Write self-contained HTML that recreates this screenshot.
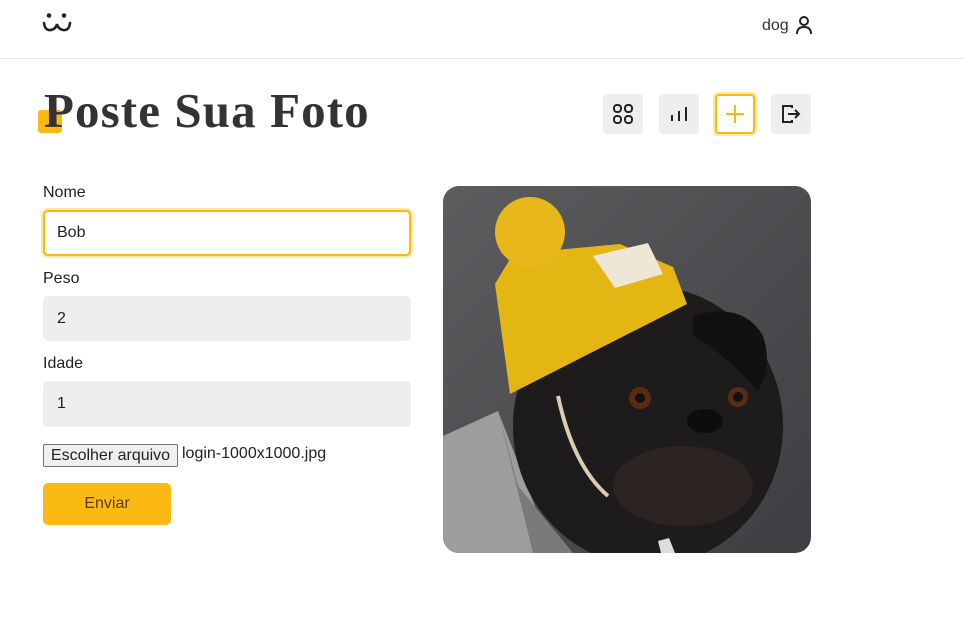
<!DOCTYPE html>
<html><head><meta charset="utf-8"><style>
*{margin:0;padding:0;box-sizing:border-box}
body{width:965px;height:631px;background:#fff;font-family:"Liberation Sans",Arial,sans-serif;color:#222;position:relative;overflow:hidden}
.a{position:absolute}
.hdr{left:0;top:0;width:965px;height:59px;border-bottom:1px solid #e8e8e8}
.btn{width:40px;height:40px;background:#eee;border-radius:4px;top:94px;display:flex;align-items:center;justify-content:center}
.lbl{font-size:16px;color:#222;left:43px}
.inp{left:43px;width:368px;height:45px;background:#eee;border-radius:5px;font-size:16px;padding-left:14px;line-height:45px}
</style></head><body>
<div class="a hdr"></div>
<svg class="a" style="left:42px;top:12px" width="30" height="24" viewBox="0 0 30 24"><circle cx="7" cy="3.5" r="2.3" fill="#222"/><circle cx="22" cy="3.5" r="2.3" fill="#222"/><path d="M2 11 Q3 19 9 18 Q14 17 15 12 Q16 17 21 18 Q27 19 28 11" fill="none" stroke="#222" stroke-width="2.6" stroke-linecap="round"/></svg>
<div class="a" style="left:762px;top:17px;font-size:16px;color:#333">dog</div>
<svg class="a" style="left:795px;top:15px" width="18" height="20" viewBox="0 0 18 20"><circle cx="9" cy="6" r="4" fill="none" stroke="#222" stroke-width="2"/><path d="M2 19 Q2 12 9 12 Q16 12 16 19" fill="none" stroke="#222" stroke-width="2"/></svg>
<div class="a" style="left:38px;top:110px;width:24px;height:23px;background:#fbb913;border-radius:3px"></div>
<div class="a" style="left:44px;top:82px;font-family:'Liberation Serif',serif;font-weight:bold;font-size:49px;color:#333;white-space:nowrap;letter-spacing:1.1px">Poste Sua Foto</div>
<div class="a btn" style="left:603px"><svg width="22" height="22" viewBox="0 0 22 22" fill="none" stroke="#222" stroke-width="2"><rect x="2" y="2" width="7" height="7" rx="3"/><rect x="13" y="2" width="7" height="7" rx="3"/><rect x="2" y="13" width="7" height="7" rx="3"/><rect x="13" y="13" width="7" height="7" rx="3"/></svg></div>
<div class="a btn" style="left:659px"><svg width="22" height="22" viewBox="0 0 22 22" stroke="#222" stroke-width="2"><path d="M4 12v6M11 8v10M18 4v14"/></svg></div>
<div class="a btn" style="left:715px;background:#fff;border:2px solid #fbb913;box-shadow:0 0 0 2px #fde9a6"><svg width="22" height="22" viewBox="0 0 22 22" stroke="#fbb913" stroke-width="2"><path d="M11 2v18M2 11h18"/></svg></div>
<div class="a btn" style="left:771px"><svg width="22" height="22" viewBox="0 0 22 22" fill="none" stroke="#222" stroke-width="2"><path d="M12 5V3H3v16h9v-2"/><path d="M8 11h11M15 7l4 4-4 4"/></svg></div>
<div class="a lbl" style="top:184px">Nome</div>
<div class="a inp" style="top:210px;height:46px;background:#fff;border:2px solid #fbb913;box-shadow:0 0 0 2px #fde9a6;line-height:42px;padding-left:12px">Bob</div>
<div class="a lbl" style="top:270px">Peso</div>
<div class="a inp" style="top:296px">2</div>
<div class="a lbl" style="top:355px">Idade</div>
<div class="a inp" style="top:381px;height:46px">1</div>
<div class="a" style="left:43px;top:444px;width:135px;height:23px;border:1px solid #767676;background:#efefef;border-radius:2px;font-size:16px;text-align:center;line-height:21px">Escolher arquivo</div>
<div class="a" style="left:182px;top:445px;font-size:16px">login-1000x1000.jpg</div>
<div class="a" style="left:43px;top:483px;width:128px;height:42px;background:#fbb913;border-radius:5px;font-size:16px;color:#5a3e00;text-align:center;line-height:42px">Enviar</div>
<svg class="a" style="left:443px;top:186px;border-radius:16px" width="368" height="367" viewBox="0 0 368 367">
<defs><linearGradient id="bg" x1="0" y1="0" x2="1" y2="1"><stop offset="0" stop-color="#5d5d60"/><stop offset="1" stop-color="#3e3e42"/></linearGradient></defs>
<rect width="368" height="367" fill="url(#bg)"/>
<path d="M0 250 L55 225 L110 367 L0 367Z" fill="#9d9d9d"/>
<path d="M55 225 L75 300 L130 367 L90 367Z" fill="#7a7a7a"/>
<ellipse cx="205" cy="240" rx="135" ry="140" fill="#1d1b1b"/>
<path d="M250 130 Q300 115 320 150 Q330 180 315 205 Q285 170 250 150Z" fill="#111"/>
<ellipse cx="240" cy="300" rx="70" ry="40" fill="#2c2422"/>
<circle cx="197" cy="212" r="11" fill="#5a2c14"/><circle cx="197" cy="212" r="5" fill="#111"/>
<circle cx="295" cy="211" r="10" fill="#5a2c14"/><circle cx="295" cy="211" r="5" fill="#111"/>
<ellipse cx="262" cy="235" rx="18" ry="12" fill="#0e0c0c"/>
<path d="M52 98 L67 208 L244 118 L230 81 L177 58 L70 68Z" fill="#e4b614"/>
<path d="M150 70 L205 57 L220 88 L172 102Z" fill="#eee7d8"/>
<circle cx="87" cy="46" r="35" fill="#e8b81a"/>
<path d="M115 210 Q130 280 165 310" fill="none" stroke="#d9ccb0" stroke-width="4"/>
<path d="M215 355 L218 367 L232 367 L226 352Z" fill="#ddd"/>
</svg>
</body></html>
